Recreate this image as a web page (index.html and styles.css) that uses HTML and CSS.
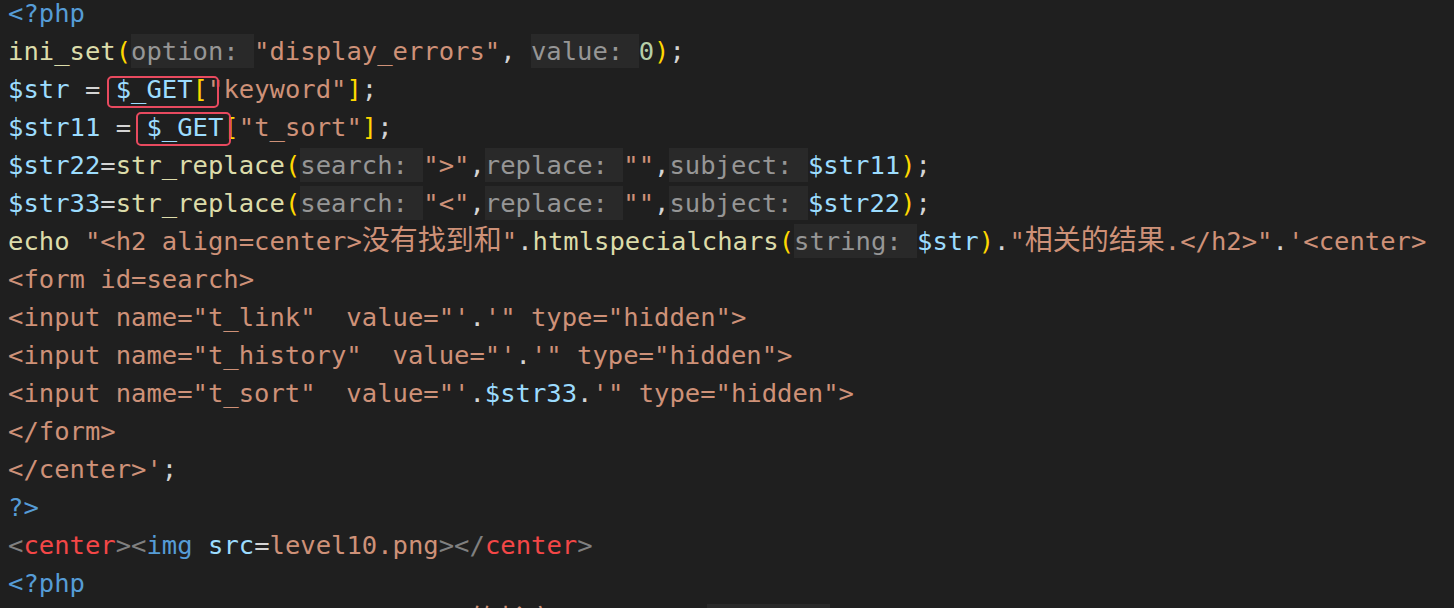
FILE: index.html
```html
<!DOCTYPE html>
<html lang="zh-CN">
<head>
<meta charset="utf-8">
<title>level10.php</title>
<link rel="stylesheet" href="styles.css">
</head>
<body>
<div class="editor">
<div class="line"><span class="k">&lt;?php</span></div>
<div class="line"><span class="f">ini_set</span><span class="b">(</span><span class="h">option: </span><span class="s">"display_errors"</span>, <span class="h">value: </span><span class="n">0</span><span class="b">)</span>;</div>
<div class="line"><span class="v">$str</span> = <span class="mark mark-a"><span class="v">$_GET</span><span class="b">[</span><span class="s">"</span></span><span class="s">keyword"</span><span class="b">]</span>;</div>
<div class="line"><span class="v">$str11</span> = <span class="mark mark-b"><span class="v">$_GET</span></span><span class="b">[</span><span class="s">"t_sort"</span><span class="b">]</span>;</div>
<div class="line"><span class="v">$str22</span>=<span class="f">str_replace</span><span class="b">(</span><span class="h">search: </span><span class="s">"&gt;"</span>,<span class="h">replace: </span><span class="s">""</span>,<span class="h">subject: </span><span class="v">$str11</span><span class="b">)</span>;</div>
<div class="line"><span class="v">$str33</span>=<span class="f">str_replace</span><span class="b">(</span><span class="h">search: </span><span class="s">"&lt;"</span>,<span class="h">replace: </span><span class="s">""</span>,<span class="h">subject: </span><span class="v">$str22</span><span class="b">)</span>;</div>
<div class="line"><span class="f">echo</span> <span class="s">"&lt;h2 align=center&gt;<span class="c">没有找到和</span>"</span>.<span class="f">htmlspecialchars</span><span class="b">(</span><span class="h">string: </span><span class="v">$str</span><span class="b">)</span>.<span class="s">"<span class="c">相关的结果</span>.&lt;/h2&gt;"</span>.<span class="s">'&lt;center&gt;</span></div>
<div class="line"><span class="s">&lt;form id=search&gt;</span></div>
<div class="line"><span class="s">&lt;input name="t_link"  value="'</span>.<span class="s">'" type="hidden"&gt;</span></div>
<div class="line"><span class="s">&lt;input name="t_history"  value="'</span>.<span class="s">'" type="hidden"&gt;</span></div>
<div class="line"><span class="s">&lt;input name="t_sort"  value="'</span>.<span class="v">$str33</span>.<span class="s">'" type="hidden"&gt;</span></div>
<div class="line"><span class="s">&lt;/form&gt;</span></div>
<div class="line"><span class="s">&lt;/center&gt;'</span>;</div>
<div class="line"><span class="k">?&gt;</span></div>
<div class="line"><span class="t">&lt;</span><span class="r">center</span><span class="t">&gt;&lt;</span><span class="k">img</span> <span class="v">src</span>=<span class="s">level10.png</span><span class="t">&gt;&lt;/</span><span class="r">center</span><span class="t">&gt;</span></div>
<div class="line"><span class="k">&lt;?php</span></div>
<div class="line"><span class="f">echo</span> <span class="s">"&lt;h3 align=center&gt;payload<span class="c">的长度</span>:"</span>.<span class="f">strlen</span><span class="b">(</span><span class="h">string: </span><span class="v">$str</span><span class="b">)</span>.<span class="s">"&lt;/h3&gt;"</span>;</div>
</div>
</body>
</html>
```

FILE: styles.css
```css
html, body {
  margin: 0;
  padding: 0;
  background: #1f1f1f;
  overflow: hidden;
}

.editor {
  margin-top: -6px;
  padding-left: 8px;
  font-family: "DejaVu Sans Mono", "Liberation Mono", "Noto Sans CJK SC", monospace;
  font-size: 25.55px;
  line-height: 38px;
  color: #d4d4d4;
}

.line {
  height: 38px;
  white-space: pre;
}

.k { color: #569cd6; }
.f { color: #dcdcaa; }
.v { color: #9cdcfe; }
.s { color: #ce9178; }
.n { color: #b5cea8; }
.b { color: #ffd700; }
.t { color: #808080; }
.r { color: #f44747; }

.c {
  font-family: "Noto Sans CJK SC", sans-serif;
  font-size: 28px;
  line-height: 0;
}

.h {
  color: #969696;
  background: #292929;
  padding: 2px 0;
}

.mark {
  position: relative;
  display: inline-block;
}

.mark::after {
  content: "";
  position: absolute;
  border: 2px solid #e84a5f;
  border-radius: 5px;
  pointer-events: none;
}

.mark-a::after {
  left: -9px;
  right: 4px;
  top: 6px;
  bottom: 0;
}

.mark-b::after {
  left: -10px;
  right: -8px;
  top: 4px;
  bottom: 0;
}
```
